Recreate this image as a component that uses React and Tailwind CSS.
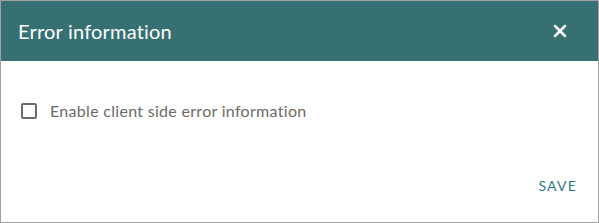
import { X } from 'lucide-react';

export default function App() {
  return (
    <div
      className="w-[599px] h-[223px] border border-[#a0a0a0] bg-white flex flex-col"
      style={{ fontFamily: 'Lato, "Open Sans", sans-serif' }}
    >
      {/* Header */}
      <div className="h-[60px] bg-[#367072] flex items-center justify-between pl-[17px] pr-[28px]">
        <h2 className="text-white text-[20px] font-normal tracking-[0.2px]">Error information</h2>
        <button className="text-white">
          <X size={20} strokeWidth={3} />
        </button>
      </div>

      {/* Body */}
      <div className="flex-1 pl-[20px] pt-[38px]">
        <label className="flex items-center gap-[13px] cursor-pointer">
          <span className="w-[16px] h-[16px] border-2 border-[#6b6b6b] rounded-[2px]" />
          <span className="text-[16px] tracking-[0.3px] text-[#6e6a66]">Enable client side error information</span>
        </label>
      </div>

      {/* Footer */}
      <div className="flex justify-end pr-[21px] pb-[26px]">
        <button className="text-[14px] tracking-[1.2px] text-[#2f7b86] uppercase">Save</button>
      </div>
    </div>
  );
}
